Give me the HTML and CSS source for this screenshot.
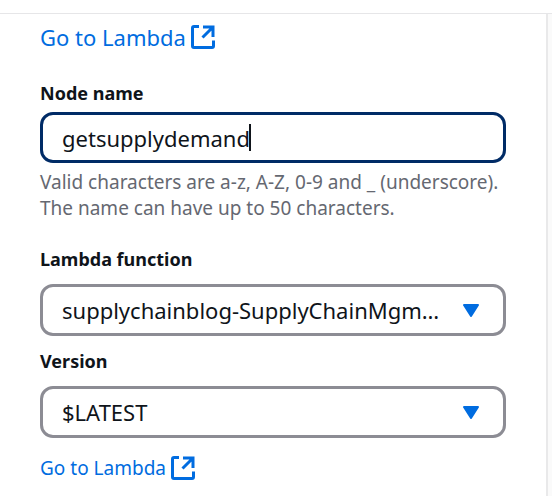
FILE: index.html
```html
<!DOCTYPE html>
<html lang="en">
<head>
    <meta charset="UTF-8">
    <meta name="viewport" content="width=device-width, initial-scale=1.0">
    <title>Lambda node</title>
    <link rel="stylesheet" href="styles.css">
</head>
<body>
    <div class="topbar"></div>
    <div class="workspace">
        <main class="panel">
            <a class="link link-large" href="#">
                Go to Lambda
                <svg class="external-icon" viewBox="0 0 24 24" aria-hidden="true">
                    <path d="M8 1.5H3Q1.5 1.5 1.5 3V21Q1.5 22.5 3 22.5H21Q22.5 22.5 22.5 21V15.5M12 2H22V12M22 2L11.5 12.5"/>
                </svg>
            </a>

            <div class="field field-name">
                <label for="nodeName">Node name</label>
                <div class="input-box">
                    <input type="text" id="nodeName" class="control" value="getsupplydemand" maxlength="50" autocomplete="off" spellcheck="false" autofocus>
                    <span class="caret" id="caret"></span>
                </div>
                <p class="hint">Valid characters are a-z, A-Z, 0-9 and _ (underscore). The name can have up to 50 characters.</p>
            </div>

            <div class="field">
                <label for="lambdaFunction">Lambda function</label>
                <div class="select-box">
                    <select id="lambdaFunction" class="control">
                        <option>supplychainblog-SupplyChainMgmtFunction</option>
                    </select>
                    <svg class="arrow" viewBox="0 0 16 13" aria-hidden="true"><path d="M1 1H15L8 12Z"/></svg>
                </div>
            </div>

            <div class="field">
                <label for="version">Version</label>
                <div class="select-box">
                    <select id="version" class="control">
                        <option>$LATEST</option>
                    </select>
                    <svg class="arrow" viewBox="0 0 16 13" aria-hidden="true"><path d="M1 1H15L8 12Z"/></svg>
                </div>
            </div>

            <a class="link" href="#">
                Go to Lambda
                <svg class="external-icon" viewBox="0 0 24 24" aria-hidden="true">
                    <path d="M8 1.5H3Q1.5 1.5 1.5 3V21Q1.5 22.5 3 22.5H21Q22.5 22.5 22.5 21V15.5M12 2H22V12M22 2L11.5 12.5"/>
                </svg>
            </a>
        </main>
        <div class="gutter"></div>
    </div>

    <script>
        const nodeName = document.getElementById('nodeName');
        const caret = document.getElementById('caret');
        const pen = document.createElement('canvas').getContext('2d');

        // Keep the thick caret at the cursor position
        function moveCaret() {
            const style = getComputedStyle(nodeName);
            pen.font = style.fontSize + ' ' + style.fontFamily;
            const before = nodeName.value.slice(0, nodeName.selectionEnd);
            const start = parseFloat(style.paddingLeft) + parseFloat(style.borderLeftWidth);
            caret.style.left = Math.floor(start + pen.measureText(before).width - nodeName.scrollLeft) + 'px';
        }

        nodeName.focus();
        nodeName.setSelectionRange(nodeName.value.length, nodeName.value.length);
        nodeName.addEventListener('input', moveCaret);
        document.addEventListener('selectionchange', moveCaret);
        moveCaret();
    </script>
</body>
</html>
```
FILE: styles.css
```css
* {
    box-sizing: border-box;
}

body {
    margin: 0;
    min-height: 100vh;
    display: flex;
    flex-direction: column;
    background: #fff;
    color: #0f141a;
    font-family: "Noto Sans", sans-serif;
    font-size: 19px;
    line-height: 26px;
}

.topbar {
    height: 14px;
    border-bottom: 1px solid #e6e6e8;
}

.workspace {
    flex: 1;
    display: flex;
}

.panel {
    flex: 1;
    min-width: 0;
    padding: 10px 40px 14px;
}

.gutter {
    width: 6px;
    border-left: 2px solid #e9e9ea;
    background: #fafafa;
}

.link {
    display: flex;
    align-items: center;
    gap: 5px;
    width: fit-content;
    margin-top: 17px;
    color: #006ce0;
    text-decoration: none;
}

.link-large {
    margin-top: 0;
    font-size: 22px;
}

.external-icon {
    width: 24px;
    height: 24px;
    fill: none;
    stroke: #006ce0;
    stroke-width: 3;
}

.field {
    display: flex;
    flex-direction: column;
    gap: 12px;
    margin-top: 12px;
}

.field-name {
    gap: 6px;
    margin: 30px 0 25px;
}

label {
    font-size: 18px;
    font-weight: 700;
}

.control {
    width: 100%;
    height: 51px;
    padding: 0 19px;
    border: 3px solid #8c8c94;
    border-radius: 13px;
    background: #fff;
    color: inherit;
    font-family: inherit;
    font-size: 22px;
    outline: none;
}

.control:focus {
    border-color: #002b66;
}

.input-box,
.select-box {
    display: flex;
    align-items: center;
    position: relative;
}

.input-box .control {
    caret-color: transparent;
}

.caret {
    position: absolute;
    width: 2px;
    height: 27px;
    background: #0f141a;
    visibility: hidden;
    pointer-events: none;
}

.control:focus + .caret {
    visibility: visible;
}

select.control {
    appearance: none;
    height: 52px;
    padding-right: 60px;
    text-overflow: ellipsis;
    white-space: nowrap;
    overflow: hidden;
}

.arrow {
    position: absolute;
    right: 27px;
    width: 16px;
    height: 13px;
    fill: #006ce0;
    stroke: #006ce0;
    stroke-width: 2;
    stroke-linejoin: round;
    pointer-events: none;
}

.hint {
    margin: 0;
    color: #656871;
}
```
